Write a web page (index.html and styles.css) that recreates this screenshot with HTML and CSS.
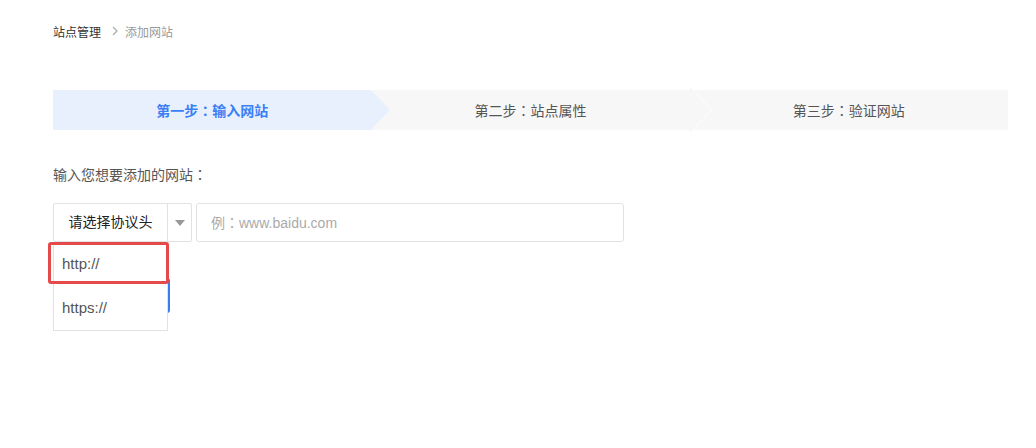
FILE: index.html
```html
<!DOCTYPE html>
<html>
<head>
  <meta charset="utf-8">
  <title>站点管理 - 添加网站</title>
  <link rel="stylesheet" href="styles.css">
</head>
<body>
  <div class="page">
    <div class="crumbs">
      <span class="crumb">站点管理</span>
      <svg class="crumb-sep" width="6" height="10" viewBox="0 0 6 10"><polyline points="1,1 5,5 1,9" fill="none" stroke="#aaa" stroke-width="1.2"/></svg>
      <span class="crumb current">添加网站</span>
    </div>

    <div class="steps">
      <div class="step active">第一步<span class="colon">：</span>输入网站</div>
      <div class="step">第二步<span class="colon">：</span>站点属性</div>
      <div class="step last">第三步<span class="colon">：</span>验证网站</div>
    </div>

    <div class="form">
      <p class="field-label">输入您想要添加的网站<span class="colon">：</span></p>
      <div class="url-row">
        <div class="proto-select">
          <span class="proto-value">请选择协议头</span>
          <span class="proto-caret"></span>
          <ul class="proto-menu">
            <li class="marked">http://</li>
            <li>https://</li>
          </ul>
        </div>
        <input class="url-input" type="text" placeholder="例：www.baidu.com">
      </div>
      <!-- label sits under the open menu, so keep it out of the painted text -->
      <button class="btn-next" aria-label="下一步"></button>
    </div>
  </div>
</body>
</html>
```

FILE: styles.css
```css
html, body {
  min-height: 100%;
}

body {
  margin: 0;
  background: #fff;
  font-family: "Liberation Sans", "Noto Sans CJK SC", sans-serif;
  color: #333;
}

.page {
  min-height: 448px;
  box-sizing: border-box;
  padding: 21px 28px 0 53px;
}

/* full-width colon, centred in the em box */
.colon {
  font-family: "Noto Sans CJK TC", sans-serif;
}

/* breadcrumb */
.crumbs {
  display: flex;
  align-items: center;
  height: 20px;
  font-size: 12px;
}

.crumb {
  color: #333;
}

.crumb.current {
  color: #999;
}

.crumb-sep {
  margin: 0 7px 0 11px;
}

/* step bar */
.steps {
  display: flex;
  margin-top: 49px;
  height: 40px;
  background: #f7f7f7;
}

.step {
  position: relative;
  flex: 1;
  line-height: 40px;
  text-align: center;
  font-size: 14px;
  color: #555;
}

.step.active {
  background: #e9f0fd;
  color: #3b7ff5;
  font-weight: bold;
  z-index: 2;
}

.step.active::after {
  content: "";
  position: absolute;
  top: 0;
  left: 100%;
  border-left: 19px solid #e9f0fd;
  border-top: 20px solid transparent;
  border-bottom: 20px solid transparent;
}

.step:not(.active):not(.last) {
  z-index: 1;
}

.step:not(.active):not(.last)::before {
  content: "";
  position: absolute;
  top: -3px;
  left: calc(100% + 1px);
  border-left: 21px solid #fff;
  border-top: 23px solid transparent;
  border-bottom: 23px solid transparent;
}

.step:not(.active):not(.last)::after {
  content: "";
  position: absolute;
  top: -3px;
  left: 100%;
  border-left: 21px solid #f7f7f7;
  border-top: 23px solid transparent;
  border-bottom: 23px solid transparent;
}

/* form */
.field-label {
  margin: 34px 0 18px;
  line-height: 20px;
  font-size: 14px;
  color: #555;
}

.url-row {
  display: flex;
  gap: 4px;
}

.proto-select {
  position: relative;
  display: flex;
  width: 137px;
  height: 37px;
  border: 1px solid #e2e2e2;
  border-radius: 2px;
}

.proto-value {
  width: 113px;
  line-height: 37px;
  text-align: center;
  font-size: 14px;
  color: #222;
  border-right: 1px solid #e2e2e2;
}

.proto-caret {
  flex: 1;
  display: flex;
  align-items: center;
  justify-content: center;
}

.proto-caret::after {
  content: "";
  border-top: 6px solid #999;
  border-left: 5px solid transparent;
  border-right: 5px solid transparent;
}

.proto-menu {
  position: absolute;
  top: calc(100% + 1px);
  left: -1px;
  width: 113px;
  margin: 0;
  padding: 0;
  list-style: none;
  background: #fff;
  border: 1px solid #e2e2e2;
  border-top: none;
  z-index: 5;
}

.proto-menu li {
  position: relative;
  height: 44px;
  line-height: 44px;
  padding-left: 8px;
  font-size: 15px;
  color: #555;
}

/* red frame around the current choice */
.proto-menu li.marked::before {
  content: "";
  position: absolute;
  top: 0;
  left: -6px;
  right: -2px;
  height: 36px;
  border: 3px solid #e44a4a;
  border-radius: 3px;
}

.url-input {
  width: 428px;
  height: 39px;
  padding: 0 14px;
  box-sizing: border-box;
  border: 1px solid #e2e2e2;
  border-radius: 3px;
  font-family: "Liberation Sans", "Noto Sans CJK TC", sans-serif;
  font-size: 14px;
  outline: none;
}

.url-input::placeholder {
  color: #aaa;
}

.btn-next {
  display: block;
  margin-top: 36px;
  width: 117px;
  height: 35px;
  border: none;
  border-radius: 3px;
  background: #3a7cf6;
}
```
